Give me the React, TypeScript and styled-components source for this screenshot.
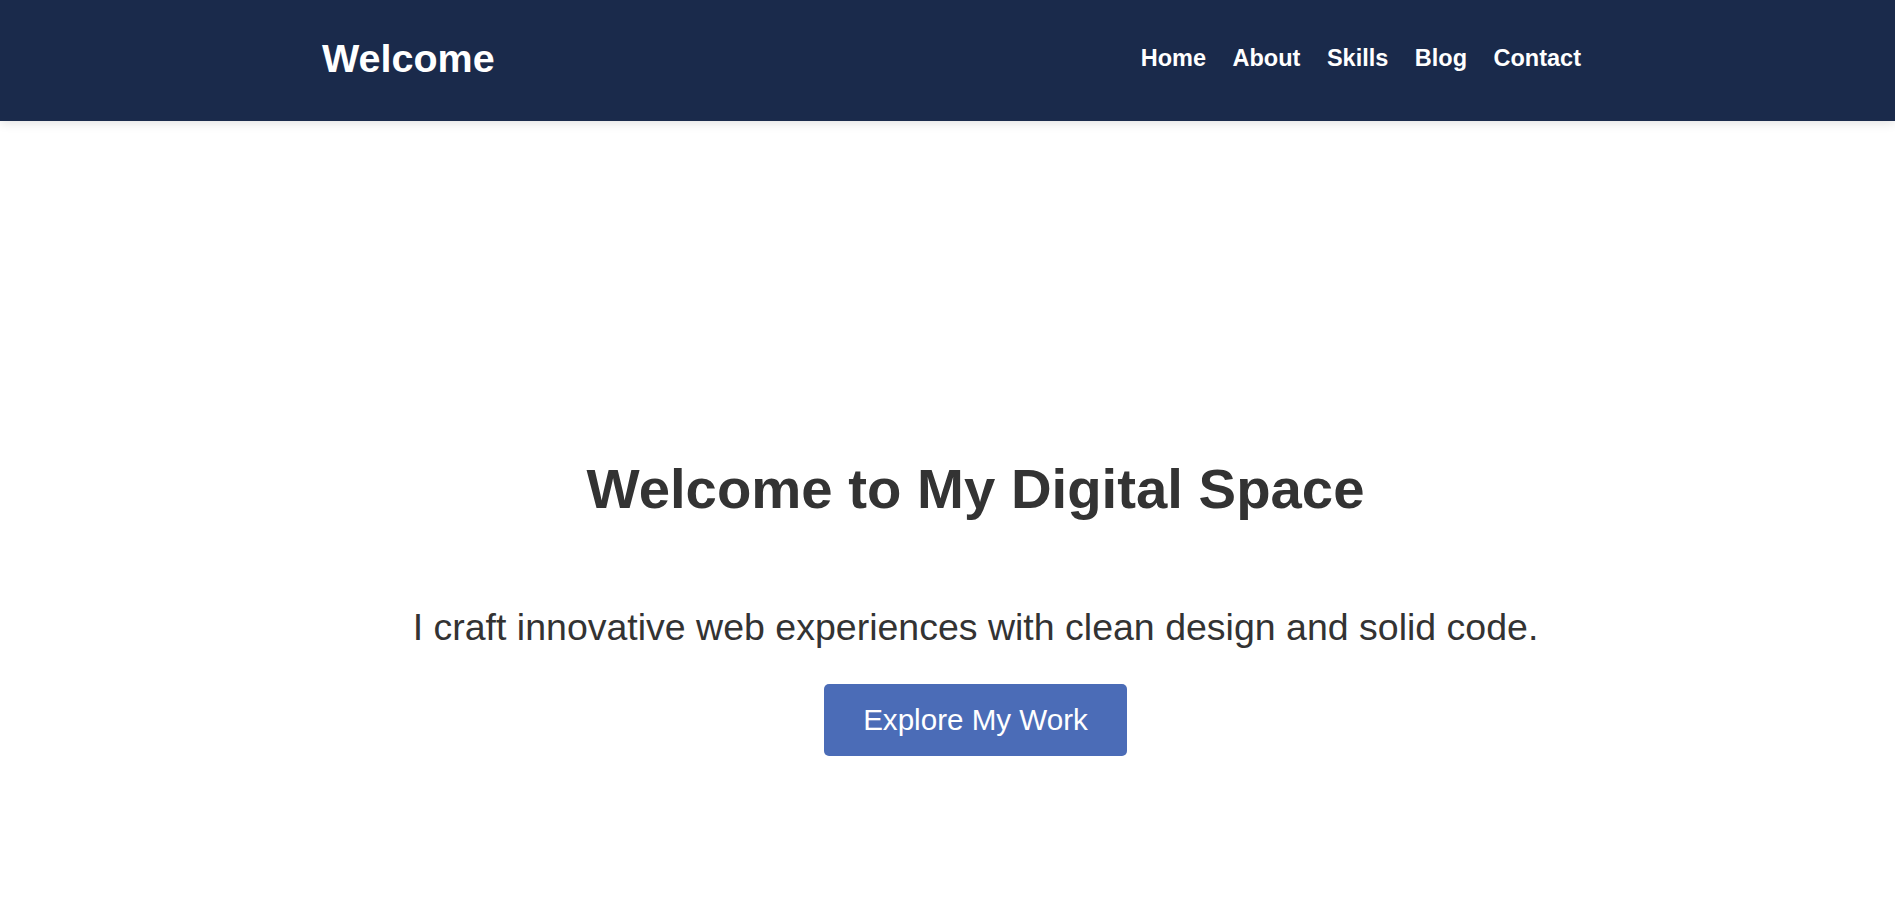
import React from "react";
import styled, { createGlobalStyle } from "styled-components";

const GlobalStyle = createGlobalStyle`
  * { box-sizing: border-box; }
  html, body { margin: 0; padding: 0; background: #ffffff; }
  body { font-family: "Liberation Sans", Arial, sans-serif; color: #333333; }
`;

const Header = styled.header`
  background: #1a2a4b;
  height: 121px;
  box-shadow: 0 2px 10px rgba(0, 0, 0, 0.12);
  display: flex;
  align-items: center;
  justify-content: center;
  padding-left: 8px;
  position: relative;
  z-index: 1;
`;

const HeaderInner = styled.div`
  width: 1259px;
  display: flex;
  align-items: center;
  justify-content: space-between;
`;

const Logo = styled.div`
  color: #ffffff;
  font-weight: 700;
  font-size: 39.5px;
  margin-top: -4px;
`;

const Nav = styled.nav`
  display: flex;
  gap: 26.5px;
  margin-top: -4px;
`;

const NavLink = styled.a`
  color: #ffffff;
  font-weight: 700;
  font-size: 23.5px;
  text-decoration: none;
`;

const Hero = styled.section`
  display: flex;
  flex-direction: column;
  align-items: center;
  padding: 335px 0 0 56px;
  text-align: center;
`;

const Title = styled.h1`
  margin: 0;
  font-size: 56.3px;
  font-weight: 700;
  color: #333333;
  line-height: normal;
`;

const Subtitle = styled.p`
  margin: 85px 0 0;
  font-size: 37.5px;
  color: #333333;
  line-height: normal;
`;

const Button = styled.button`
  margin-top: 35px;
  width: 303px;
  height: 72px;
  border: none;
  border-radius: 5px;
  background: #4b6cb7;
  color: #ffffff;
  font-family: "Liberation Sans", Arial, sans-serif;
  font-size: 29.6px;
  cursor: pointer;
`;

export default function App() {
  return (
    <>
      <GlobalStyle />
      <Header>
        <HeaderInner>
          <Logo>Welcome</Logo>
          <Nav>
            <NavLink href="#">Home</NavLink>
            <NavLink href="#">About</NavLink>
            <NavLink href="#">Skills</NavLink>
            <NavLink href="#">Blog</NavLink>
            <NavLink href="#">Contact</NavLink>
          </Nav>
        </HeaderInner>
      </Header>
      <Hero>
        <Title>Welcome to My Digital Space</Title>
        <Subtitle>I craft innovative web experiences with clean design and solid code.</Subtitle>
        <Button>Explore My Work</Button>
      </Hero>
    </>
  );
}
